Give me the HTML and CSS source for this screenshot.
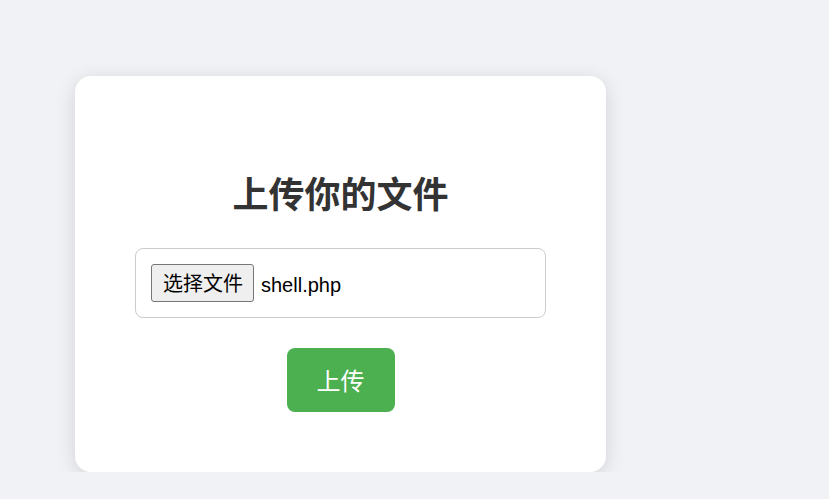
FILE: index.html
```html
<!DOCTYPE html>
<html lang="zh-CN">
<head>
  <meta charset="UTF-8" />
  <meta name="viewport" content="width=device-width, initial-scale=1.0"/>
  <title>文件上传</title>
  <link rel="stylesheet" href="styles.css">
</head>
<body>

<div class="upload-card">
  <h1>上传你的文件</h1>

  <!-- FILE PICKER -->
  <div class="file-box">
    <label class="file-pick"><input type="file" name="file" hidden>选择文件</label>
    <span class="file-name">shell.php</span>
  </div>

  <button class="upload-btn" type="submit">上传</button>
</div>

</body>
</html>
```

FILE: styles.css
```css
*{box-sizing:border-box}

body {
  margin:0;
  padding:76px 0 0 75px;
  background:#f0f2f5;
  font-family:"Liberation Sans","Noto Sans CJK SC",sans-serif;
}

.upload-card {
  width:531px;
  padding:60px;
  background:#fff;
  border-radius:16px;
  box-shadow:0 4px 20px rgba(0,0,0,.13);
  display:flex;
  flex-direction:column;
  align-items:center;
}

h1 {
  margin:34px 0 26px;
  font-size:36px;
  line-height:52px;
  font-weight:700;
  color:#333;
}

.file-box {
  width:100%;
  display:flex;
  align-items:center;
  gap:7px;
  padding:15px;
  border:1px solid #ccc;
  border-radius:8px;
  font-size:20px;
  color:#000;
}

.file-pick {
  padding:5px 10px 2px 11px;
  line-height:29px;
  background:#efefef;
  border:1px solid #767676;
  border-radius:3px;
  cursor:pointer;
}

.file-name {line-height:29px;padding-top:4px}

.upload-btn {
  margin-top:30px;
  padding:17px 30px 13px;
  font-family:inherit;
  font-size:24px;
  line-height:34px;
  color:#fff;
  background:#4caf50;
  border:none;
  border-radius:8px;
  cursor:pointer;
}
```
